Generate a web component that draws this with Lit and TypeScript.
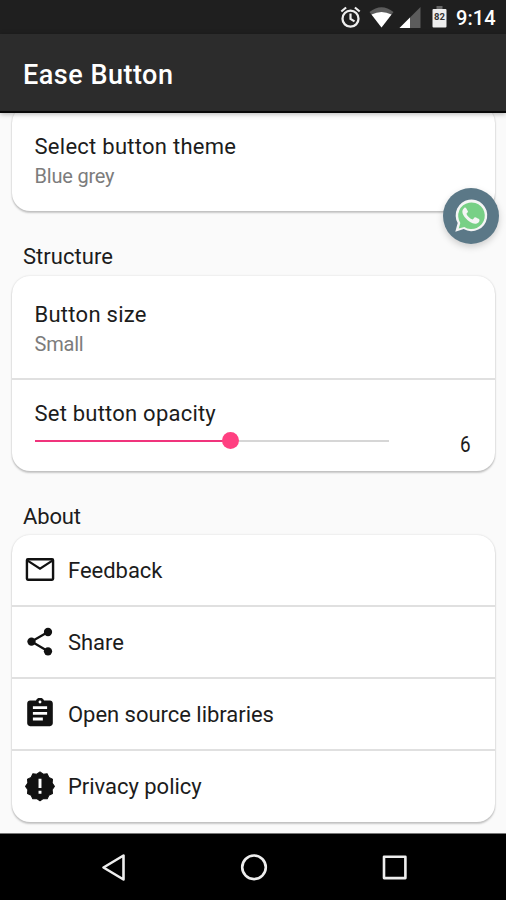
import { LitElement, html, css, svg } from "lit";
import { customElement } from "lit/decorators.js";

const sealPoints = Array.from({ length: 24 }, (_, i) => {
  const angle = (i * Math.PI) / 12;
  const radius = i % 2 ? 9.4 : 10.8;
  return `${(12 + radius * Math.cos(angle)).toFixed(2)},${(11.5 + radius * Math.sin(angle)).toFixed(2)}`;
}).join(" ");

const icons = {
  mail: svg`<rect x="2.2" y="3.9" width="19.6" height="15.4" rx=".7" fill="none" stroke="currentColor" stroke-width="1.8"/><path d="M2.700 5l9.300 6 9.300-6" fill="none" stroke="currentColor" stroke-width="1.700"/>`,
  share: svg`<path d="M18 4.500L5.600 11.700 18 19" fill="none" stroke="currentColor" stroke-width="1.700"/><circle cx="18" cy="4.500" r="3.100"/><circle cx="5.600" cy="11.700" r="3.100"/><circle cx="18" cy="19" r="3.100"/>`,
  clipboard: svg`<g transform="translate(-.8 -1.300) scale(1.067)"><path d="M19 3h-4.180C14.400 1.840 13.300 1 12 1c-1.300 0-2.400.840-2.820 2H5c-1.100 0-2 .900-2 2v14c0 1.100.900 2 2 2h14c1.100 0 2-.900 2-2V5c0-1.100-.900-2-2-2zm-7 0c.550 0 1 .450 1 1s-.450 1-1 1-1-.450-1-1 .450-1 1-1zm2 14H7v-2h7v2zm3-4H7v-2h10v2zm0-4H7V7h10v2z"/></g>`,
  badge: svg`<polygon points=${sealPoints} stroke="currentColor" stroke-width=".8" stroke-linejoin="round"/><path d="M10.900 5.800h2.200v7h-2.200zM10.900 14.800h2.200v2.200h-2.200z" fill="#fff"/>`,
};

@customElement("app-root")
export class AppRoot extends LitElement {
  static styles = css`
    :host { display: block; width: 506px; height: 900px; overflow: hidden; position: relative; font-family: Roboto, "Liberation Sans", sans-serif; color: #1c1c1c; background: #fafafa; }
    * { box-sizing: border-box; }
    svg { display: block; fill: currentColor; flex: none; }
    .screen { display: flex; flex-direction: column; height: 900px; }
    .status { height: 34px; background: #1f1f1f; display: flex; align-items: center; color: #fff; flex: none; }
    .status svg { margin-left: 338px; }
    .time { font-size: 20px; font-weight: 500; line-height: 34px; margin: 2px 0 0 5px; letter-spacing: .05px; }
    .bar { height: 79px; background: #2c2c2c; border-bottom: 2px solid #080808; box-shadow: 0 1px 5px rgba(0,0,0,.3); flex: none; display: flex; align-items: center; padding: 4px 0 0 23px; z-index: 1; }
    h1 { margin: 0; color: #fff; font-size: 27px; font-weight: 500; letter-spacing: .5px; line-height: 36px; }
    main { flex: 1; overflow: hidden; padding: 0 11px 0 12px; min-height: 0; }
    .card { background: #fff; border-radius: 18px; box-shadow: 0 2px 2px rgba(0,0,0,.2), 0 0 2px rgba(0,0,0,.16); }
    .theme { height: 106px; margin-top: -8px; padding-top: 28px; }
    .pref { padding-left: 22.500px; }
    .size { height: 104px; padding-top: 25px; border-bottom: 2px solid #e0e0e0; }
    .title { font-size: 22px; line-height: 28px; letter-spacing: .27px; white-space: nowrap; }
    .sub { font-size: 20px; line-height: 28px; color: #7c7c7c; letter-spacing: -.2px; margin-top: 1px; }
    h2 { margin: 0; padding-left: 11px; font-size: 22px; font-weight: 400; letter-spacing: .05px; line-height: 28px; }
    .structure { margin: 32px 0 5px; }
    .about { margin: 32px 0 4px; letter-spacing: -.15px; }
    .opacity { height: 91px; padding-top: 20px; display: flex; }
    .opacity .title { letter-spacing: .22px; }
    .control { width: 354px; }
    .track { height: 18px; margin-top: 3.500px; display: flex; align-items: center; }
    .filled { height: 2px; width: 196px; background: #f0347c; }
    .thumb { width: 17px; height: 17px; border-radius: 50%; background: #ff4081; margin: 0 -8.500px; z-index: 1; }
    .rest { height: 2px; flex: 1; background: #d6d6d6; }
    .value { margin: 30px 0 0 70px; font-size: 22.500px; line-height: 28px; transform: scaleX(.84); }
    .row { height: 72px; border-bottom: 2px solid #e0e0e0; display: flex; align-items: center; padding-left: 12px; gap: 12px; }
    .row:last-child { border: 0; height: 71px; }
    .row .title { letter-spacing: -.03px; padding-top: 1px; }
    .row svg { color: #111; }
    .fab { position: absolute; left: 443px; top: 188px; width: 56px; height: 56px; border-radius: 50%; background: #5b7887; box-shadow: 0 3px 7px rgba(0,0,0,.18); z-index: 2; }
    nav { height: 67px; background: #000; border-top: 1px solid #777; flex: none; }
  `;

  private icon(glyph: unknown) {
    return html`<svg width="32" height="32" viewBox="0 0 24 24">${glyph}</svg>`;
  }

  private row(glyph: unknown, label: string) {
    return html`<div class="row">${this.icon(glyph)}<span class="title">${label}</span></div>`;
  }

  render() {
    return html`
      <div class="screen">
        <div class="status">
          <svg width="113" height="34" viewBox="338 0 113 34">
            <circle cx="350.500" cy="18.700" r="8" fill="none" stroke="#eee" stroke-width="2.300"/>
            <path d="M350.500 13.500v5.500l4 2.400M341.300 11.500l4.800-4M359.700 11.500l-4.800-4" fill="none" stroke="#eee" stroke-width="2.200"/>
            <path d="M369.500 12q12-9.500 24 0L381.500 27.500z" fill="#5c5c5c"/>
            <path d="M371.500 14.500q10-5 20 0L381.500 27.500z"/>
            <path d="M420.500 7v21h-21z" fill="#5c5c5c"/>
            <path d="M410 17.500v10.500h-10.500z"/>
            <path d="M436.500 6h6v3h-6z" fill="#666"/>
            <rect x="432.500" y="9" width="14" height="18.500" rx="1" fill="#eee"/>
            <text x="439.500" y="20" text-anchor="middle" font-size="9.500" font-weight="700" font-family="Roboto, sans-serif" fill="#333">82</text>
          </svg>
          <span class="time">9:14</span>
        </div>
        <header class="bar"><h1>Ease Button</h1></header>
        <main>
          <section class="card pref theme"><div class="title">Select button theme</div><div class="sub">Blue grey</div></section>
          <h2 class="structure">Structure</h2>
          <section class="card">
            <div class="pref size"><div class="title">Button size</div><div class="sub">Small</div></div>
            <div class="pref opacity">
              <div class="control">
                <div class="title">Set button opacity</div>
                <div class="track"><div class="filled"></div><div class="thumb"></div><div class="rest"></div></div>
              </div>
              <div class="value">6</div>
            </div>
          </section>
          <h2 class="about">About</h2>
          <section class="card">
            ${this.row(icons.mail, "Feedback")}
            ${this.row(icons.share, "Share")}
            ${this.row(icons.clipboard, "Open source libraries")}
            ${this.row(icons.badge, "Privacy policy")}
          </section>
        </main>
        <nav>
          <svg width="506" height="66" viewBox="0 834 506 66" fill="none" stroke="#eee" stroke-width="2.600" stroke-linejoin="round">
            <path d="M103.500 867.500l20-12v24z" fill="none"/>
            <circle cx="254" cy="867.300" r="11.800" fill="none"/>
            <rect x="384" y="856.700" width="21.400" height="21.400" fill="none"/>
          </svg>
        </nav>
      </div>
      <div class="fab">
        <svg width="56" height="56" viewBox="0 0 56 56">
          <path d="M12.300 43.800l2.400-8.700a15.800 15.800 0 1 1 6 6z" fill="#f5f5f5"/>
          <path d="M15.700 40.400l1.600-5.500a13.300 13.300 0 1 1 4 4z" fill="#78d086"/>
          <path d="M23.200 20.300c-.6-1-1.300-.8-2-.4-3.700 3-1 7.400 1.300 10.100 3.200 3.800 7.700 6.700 11.300 5.500 2.300-.8 3-2.400 2.600-4-.4-.6-3.700-2.200-4.400-2.200-.8.100-1.500 2-2.300 2.200-2.700-.7-5.200-3.200-6.200-5.500 0-.8 1.500-1.500 1.500-2.400z" fill="#f5f5f5"/>
        </svg>
      </div>
    `;
  }
}
